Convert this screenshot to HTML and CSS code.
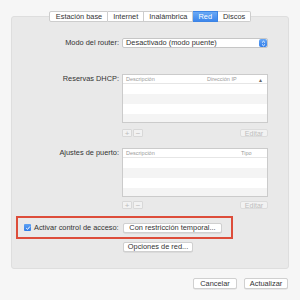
FILE: index.html
```html
<!DOCTYPE html>
<html lang="es">
<head>
    <meta charset="UTF-8">
    <title>Red</title>
    <link rel="stylesheet" href="styles.css">
</head>
<body>
    <div class="tabs">
        <div class="tab">Estación base</div>
        <div class="tab">Internet</div>
        <div class="tab">Inalámbrica</div>
        <div class="tab active">Red</div>
        <div class="tab">Discos</div>
    </div>

    <div class="panel">
        <div class="row row-mode">
            <div class="label">Modo del router:</div>
            <div class="select">
                <span>Desactivado (modo puente)</span>
                <span class="stepper">
                    <svg width="5" height="7" viewBox="0 0 5 7">
                        <path d="M1 2.6 L2.5 1.2 L4 2.6 M1 4.4 L2.5 5.8 L4 4.4" fill="none" stroke="#fff" stroke-width="0.9"/>
                    </svg>
                </span>
            </div>
        </div>

        <div class="row row-dhcp">
            <div class="label">Reservas DHCP:</div>
            <div class="table">
                <div class="thead">
                    <span class="col-desc">Descripción</span>
                    <span class="col-ip">Dirección IP</span>
                    <span class="sort">&#9652;</span>
                </div>
                <div class="trow"></div>
                <div class="trow alt"></div>
                <div class="trow"></div>
                <div class="trow alt"></div>
            </div>
        </div>
        <div class="row row-tools">
            <div class="label"></div>
            <div class="tools">
                <div class="pm">
                    <span class="btn-sm">+</span>
                    <span class="btn-sm">&minus;</span>
                </div>
                <span class="btn-edit">Editar</span>
            </div>
        </div>

        <div class="row row-ports">
            <div class="label">Ajustes de puerto:</div>
            <div class="table">
                <div class="thead">
                    <span class="col-desc">Descripción</span>
                    <span class="col-type">Tipo</span>
                </div>
                <div class="trow"></div>
                <div class="trow alt"></div>
                <div class="trow"></div>
                <div class="trow alt"></div>
            </div>
        </div>
        <div class="row row-tools row-tools2">
            <div class="label"></div>
            <div class="tools">
                <div class="pm">
                    <span class="btn-sm">+</span>
                    <span class="btn-sm">&minus;</span>
                </div>
                <span class="btn-edit">Editar</span>
            </div>
        </div>

        <div class="access">
            <div class="access-label">
                <span class="check">
                    <svg width="6" height="6" viewBox="0 0 6 6">
                        <path d="M1.2 3.1 L2.5 4.4 L4.9 1.5" fill="none" stroke="#fff" stroke-width="1"/>
                    </svg>
                </span>
                <span>Activar control de acceso:</span>
            </div>
            <span class="btn btn-time">Con restricción temporal...</span>
        </div>

        <div class="row row-options">
            <div class="label"></div>
            <div><span class="btn btn-options">Opciones de red...</span></div>
        </div>
    </div>

    <div class="footer">
        <span class="btn btn-foot">Cancelar</span>
        <span class="btn btn-foot">Actualizar</span>
    </div>
</body>
</html>
```

FILE: styles.css
```css
body {
    margin: 0;
    width: 300px;
    height: 300px;
    background: #f6f6f6;
    font-family: "Liberation Sans", Arial, sans-serif;
    font-size: 7.4px;
    color: #333;
    white-space: nowrap;
    overflow: hidden;
}

.tabs {
    display: flex;
    justify-content: center;
    margin-top: 11px;
    position: relative;
    z-index: 1;
}

.tab {
    height: 9px;
    line-height: 9px;
    padding: 0 5px;
    background: #fff;
    border: 1px solid #cdcdcd;
    border-left: none;
    color: #333;
}

.tab:first-child {
    border-left: 1px solid #cdcdcd;
    border-radius: 2px 0 0 2px;
    padding-left: 6px;
}

.tab:last-child {
    border-radius: 0 2px 2px 0;
}

.tab.active {
    background: linear-gradient(#6aa9f5, #3d87ec);
    border-color: #3d84e4;
    color: #fff;
}

.panel {
    margin: -6px 11px 0;
    height: 253px;
    box-sizing: border-box;
    padding-top: 21px;
    background: #e9e9e9;
    border: 1px solid #dedede;
    border-radius: 3px;
}

.row {
    display: flex;
    align-items: flex-start;
}

.label {
    width: 107px;
    flex: none;
    text-align: right;
    margin-right: 3px;
    color: #333;
}

.row-mode .label {
    line-height: 10px;
}

.select {
    width: 146px;
    height: 10px;
    box-sizing: border-box;
    display: flex;
    align-items: center;
    justify-content: space-between;
    padding-left: 3px;
    background: #fff;
    border: 1px solid #c6c6c6;
    border-radius: 2px;
    line-height: 8px;
}

.stepper {
    width: 8px;
    height: 8px;
    display: flex;
    align-items: center;
    justify-content: center;
    background: linear-gradient(#68a8f6, #2f7ce8);
    border-radius: 2px;
}

.row-dhcp {
    margin-top: 26px;
}

.row-dhcp .label,
.row-ports .label {
    line-height: 9px;
}

.table {
    width: 146px;
    height: 49px;
    box-sizing: border-box;
    background: #fff;
    border: 1px solid #cbcbcb;
    overflow: hidden;
}

.thead {
    height: 8px;
    display: flex;
    align-items: center;
    font-size: 5.5px;
    color: #9a9a9a;
    border-bottom: 1px solid #e6e6e6;
}

.col-desc {
    padding-left: 3px;
    flex: 1;
}

.col-ip {
    width: 52px;
}

.col-type {
    width: 26px;
}

.sort {
    width: 8px;
    font-size: 6px;
    color: #666;
}

.trow {
    height: 10px;
    background: #fff;
}

.trow.alt {
    background: #f4f4f4;
}

.row-tools {
    margin-top: 6px;
}

.row-tools2 {
    margin-top: 4px;
}

.tools {
    width: 146px;
    display: flex;
    justify-content: space-between;
}

.pm {
    display: flex;
    gap: 1px;
}

.btn-sm {
    width: 10px;
    height: 8px;
    box-sizing: border-box;
    line-height: 7px;
    text-align: center;
    background: #f2f2f2;
    border: 1px solid #d8d8d8;
    border-radius: 1px;
    color: #bcbcbc;
    font-size: 8px;
}

.btn-edit {
    width: 28px;
    height: 8px;
    box-sizing: border-box;
    line-height: 7px;
    text-align: center;
    background: #f2f2f2;
    border: 1px solid #dcdcdc;
    border-radius: 2px;
    color: #bdbdbd;
    font-size: 7px;
}

.row-ports {
    margin-top: 11px;
}

.access {
    margin: 7px 0 0 4px;
    width: 217px;
    height: 23px;
    box-sizing: border-box;
    display: flex;
    align-items: center;
    border: 2px solid #dd4d3a;
}

.access-label {
    width: 103px;
    display: flex;
    align-items: center;
    gap: 3px;
    padding-left: 6px;
    box-sizing: border-box;
    margin-right: 2px;
}

.check {
    width: 7px;
    height: 7px;
    flex: none;
    display: flex;
    align-items: center;
    justify-content: center;
    background: linear-gradient(#5ea2f3, #2f7ce8);
    border-radius: 1px;
}

.btn {
    display: inline-block;
    box-sizing: border-box;
    text-align: center;
    background: #fff;
    border: 1px solid #d0d0d0;
    border-radius: 2px;
    box-shadow: 0 0.5px 0.5px rgba(0, 0, 0, 0.12);
    color: #333;
}

.btn-time {
    width: 99px;
    height: 10px;
    line-height: 8px;
}

.row-options {
    margin-top: 3px;
}

.btn-options {
    margin-left: 1px;
    width: 70px;
    height: 10px;
    line-height: 8px;
}

.footer {
    display: flex;
    justify-content: flex-end;
    gap: 7px;
    margin: 9px 12px 0 0;
}

.btn-foot {
    width: 44px;
    height: 11px;
    line-height: 9px;
}
```
